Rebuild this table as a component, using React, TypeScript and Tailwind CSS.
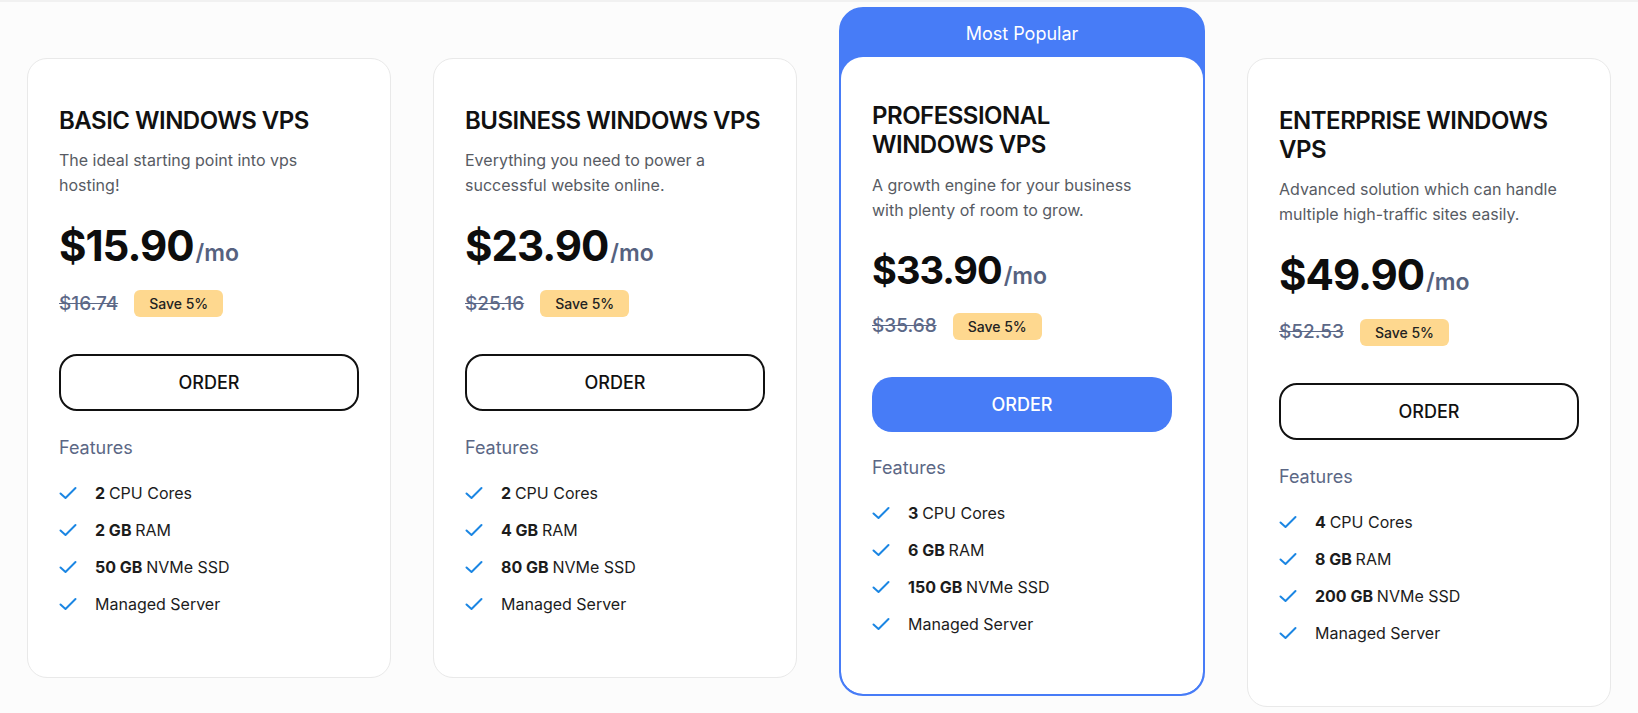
import { ReactNode } from "react";

type Plan = {
  name: string;
  desc: string;
  price: string;
  old: string;
  cpu: string;
  ram: string;
  ssd: string;
  popular?: boolean;
};

const plans: Plan[] = [
  { name: "BASIC WINDOWS VPS", desc: "The ideal starting point into vps hosting!", price: "$15.90", old: "$16.74", cpu: "2", ram: "2 GB", ssd: "50 GB" },
  { name: "BUSINESS WINDOWS VPS", desc: "Everything you need to power a successful website online.", price: "$23.90", old: "$25.16", cpu: "2", ram: "4 GB", ssd: "80 GB" },
  { name: "PROFESSIONAL WINDOWS VPS", desc: "A growth engine for your business with plenty of room to grow.", price: "$33.90", old: "$35.68", cpu: "3", ram: "6 GB", ssd: "150 GB", popular: true },
  { name: "ENTERPRISE WINDOWS VPS", desc: "Advanced solution which can handle multiple high-traffic sites easily.", price: "$49.90", old: "$52.53", cpu: "4", ram: "8 GB", ssd: "200 GB" },
];

function CheckIcon() {
  return (
    <svg width="18" height="14" viewBox="0 0 18 14" fill="none" className="shrink-0">
      <path d="M1.5 7.5 L6.5 12 L16.5 2" stroke="#1b86e3" strokeWidth="2" strokeLinecap="round" strokeLinejoin="round" />
    </svg>
  );
}

function Feature({ bold, children }: { bold?: string; children: ReactNode }) {
  return (
    <li className="flex items-center h-6 text-[16px] text-[#1c1c1c]">
      <span className="w-[36px] flex"><CheckIcon /></span>
      <span>
        {bold && <span className="font-bold">{bold} </span>}
        {children}
      </span>
    </li>
  );
}

function PlanBody({ p }: { p: Plan }) {
  return (
    <div className={`px-[31px] ${p.popular ? "pt-[45px] pb-[58px]" : "pt-[48px] pb-[61px]"}`}>
      <h3 className="text-[24px] leading-[28.8px] font-semibold text-[#111] tracking-[-0.5px]">{p.name}</h3>
      <p className={`${p.popular ? "mt-[13px]" : "mt-[12px]"} text-[16px] leading-[25px] text-[#575b63] pr-4`}>{p.desc}</p>

      <div className={`flex items-baseline ${p.popular ? "mt-[28px]" : "mt-[27px]"}`}>
        <span
          className={`font-bold text-[#0d0d0d] tracking-[-1px] ${
            p.popular ? "text-[38px] leading-[38px]" : "text-[42px] leading-[42px]"
          }`}
        >
          {p.price}
        </span>
        <span className="ml-[2px] text-[23px] font-semibold text-[#56627f]">/mo</span>
      </div>

      <div className={`flex items-center gap-4 h-[27px] ${p.popular ? "mt-[20px]" : "mt-5"}`}>
        <span className="text-[19px] font-medium text-[#5c6887] line-through">{p.old}</span>
        <span className="h-[27px] px-[15px] flex items-center rounded-md bg-[#fed88f] text-[14px] font-medium text-[#222]">
          Save 5%
        </span>
      </div>

      {p.popular ? (
        <button className="mt-[37px] w-full h-[55px] rounded-[20px] bg-[#477cf7] text-white text-[18px] font-medium">
          ORDER
        </button>
      ) : (
        <button className="mt-[37px] w-full h-[57px] rounded-[18px] border-2 border-[#111] bg-white text-[#111] text-[18px] font-medium">
          ORDER
        </button>
      )}

      <div className={`${p.popular ? "mt-[22px]" : "mt-[23px]"} text-[18px] leading-[28px] text-[#5b6785]`}>Features</div>

      <ul className="mt-[19px] flex flex-col gap-[13px]">
        <Feature bold={p.cpu}>CPU Cores</Feature>
        <Feature bold={p.ram}>RAM</Feature>
        <Feature bold={p.ssd}>NVMe SSD</Feature>
        <Feature>Managed Server</Feature>
      </ul>
    </div>
  );
}

export default function App() {
  return (
    <div className="min-h-[713px] bg-[#fcfcfc] font-['Inter','Liberation_Sans',sans-serif] border-t-2 border-[#f1f1f1]">
      <div className="flex justify-center items-start gap-[42px] pt-[5px]">
        {plans.map((p) =>
          p.popular ? (
            <div key={p.name} className="w-[366px] rounded-[24px] border-2 border-[#477cf7] bg-[#477cf7] overflow-hidden">
              <div className="h-[48px] flex items-center justify-center text-white text-[18px]">Most Popular</div>
              <div className="bg-white rounded-[22px]">
                <PlanBody p={p} />
              </div>
            </div>
          ) : (
            <div key={p.name} className="w-[364px] mt-[51px] rounded-[20px] border border-[#e9e9e9] bg-white">
              <PlanBody p={p} />
            </div>
          )
        )}
      </div>
    </div>
  );
}
